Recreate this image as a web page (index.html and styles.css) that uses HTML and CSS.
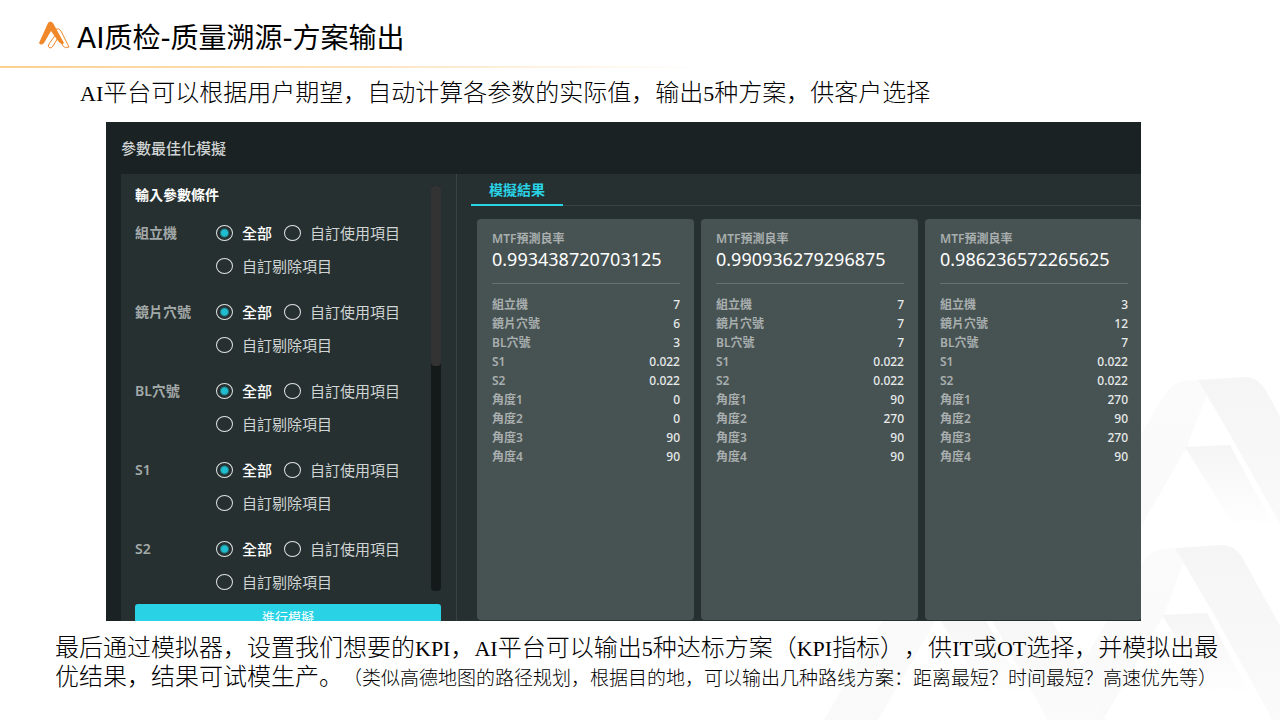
FILE: index.html
```html
<!DOCTYPE html>
<html lang="zh-CN">
<head>
    <meta charset="UTF-8">
    <meta name="viewport" content="width=device-width, initial-scale=1.0">
    <title>AI质检-质量溯源-方案输出</title>
    <link rel="stylesheet" href="styles.css">
</head>
<body>
    <!-- Pale logo pattern in the bottom right corner -->
    <svg class="watermark" viewBox="0 0 500 360" aria-hidden="true">
        <defs>
            <linearGradient id="leg" x1="0" y1="0" x2="0" y2="1">
                <stop offset="0" stop-color="#f5f5f5"/>
                <stop offset="1" stop-color="#fcfcfc"/>
            </linearGradient>
            <linearGradient id="leg-soft" x1="0" y1="0" x2="0" y2="1">
                <stop offset="0" stop-color="#fbfbfb"/>
                <stop offset="1" stop-color="#f9f9f9"/>
            </linearGradient>
            <linearGradient id="bar" x1="0" y1="0" x2="0" y2="1">
                <stop offset="0" stop-color="#f5f5f5"/>
                <stop offset="1" stop-color="#fff"/>
            </linearGradient>
            <g id="mark">
                <path fill="url(#leg-soft)" d="M0 190 L100 20 Q110 5 122 4 L135 3 L144 16 L124 70 L60 180 Q40 205 20 205 Q0 205 0 190 Z"/>
                <path fill="url(#leg)" d="M135 3 L182 0 Q194 0 202 12 L300 190 L262 215 Q240 205 230 170 L173 68 Z"/>
                <path fill="url(#bar)" d="M122 70 L167 68 L210 148 L173 152 Z"/>
            </g>
        </defs>
        <use href="#mark" x="283" y="17"/>
        <use href="#mark" x="260" y="185"/>
        <use href="#mark" x="35" y="185"/>
    </svg>

    <header class="header">
        <svg class="logo" viewBox="0 0 32 28" aria-hidden="true">
            <path fill="#f0882a" d="M10 2 Q12 -1 15 2 L26 22 Q24 25 20 20 L13 10 L6 22 Q3 25 1 22 Z"/>
            <path fill="none" stroke="#f0882a" d="M18 13 L11 23 Q9 26 12 27 Q14 27 15 25 L21 15 M18 8 Q21 7 23 10 L31 26 Q27 28 25 25 L18 12"/>
        </svg>
        <h1>AI质检-质量溯源-方案输出</h1>
    </header>

    <p class="intro"><span class="latin">AI</span>平台可以根据用户期望，自动计算各参数的实际值，输出<span class="latin">5</span>种方案，供客户选择</p>

    <main class="simulator" lang="zh-TW">
        <h2>參數最佳化模擬</h2>
        <div class="workspace">
            <form class="params">
                <div class="params-body">
                    <div class="params-list" id="params-list">
                        <h3>輸入參數條件</h3>
                        <!-- Parameter rows are added here -->
                    </div>
                    <div class="scrollbar"><div class="thumb"></div></div>
                </div>
                <button type="button" class="run-button">進行模擬</button>
            </form>
            <section class="results">
                <div class="tabs">
                    <button type="button" class="tab">模擬結果</button>
                </div>
                <div class="cards" id="cards"></div>
            </section>
        </div>
    </main>

    <p class="summary">最后通过模拟器，设置我们想要的<span class="latin">KPI</span>，<span class="latin">AI</span>平台可以输出<span class="latin">5</span>种达标方案（<span class="latin">KPI</span>指标），供<span class="latin">IT</span>或<span class="latin">OT</span>选择，并模拟出最优结果，结果可试模生产。<small>（类似高德地图的路径规划，根据目的地，可以输出几种路线方案：距离最短？时间最短？高速优先等）</small></p>

    <script src="script.js"></script>
</body>
</html>
```
FILE: styles.css
```css
* {
    box-sizing: border-box;
}

body {
    position: relative;
    display: flex;
    flex-direction: column;
    height: 100vh;
    margin: 0;
    overflow: hidden;
    background-color: #fff;
    color: #000;
    font-family: "Noto Sans CJK SC", sans-serif;
    text-spacing-trim: space-all;
}

h1, h2, h3, p, dl, dd {
    margin: 0;
}

.watermark {
    position: absolute;
    right: 0;
    bottom: 0;
    z-index: -1;
    width: 500px;
}

/* Title bar */
.header {
    position: relative;
    display: flex;
    align-items: center;
    gap: 7px;
    height: 68px;
    padding: 10px 38px 0;
}

.header::after {
    content: "";
    position: absolute;
    left: 0;
    bottom: 0;
    width: 55%;
    height: 2px;
    background: linear-gradient(to right, #fbd08f, #fde3bd 50%, #fff);
}

.logo {
    width: 32px;
    height: 28px;
    margin-bottom: 8px;
}

h1 {
    font-family: "DejaVu Sans", "Noto Sans CJK SC", sans-serif;
    font-size: 28px;
    font-weight: 400;
    line-height: 40px;
}

.intro {
    padding: 7px 80px 15px;
    font-size: 24px;
    font-weight: 300;
    line-height: 32px;
}

.latin {
    font-family: "Liberation Serif", serif;
    font-size: 22px;
    line-height: 1;
}

/* Simulator panel */
.simulator {
    display: flex;
    flex: 1;
    flex-direction: column;
    min-height: 0;
    margin: 0 139px 0 106px;
    padding: 12px 0 0 15px;
    overflow: hidden;
    background-color: #1a2223;
    color: #d0d4d4;
    font-family: "Noto Sans", "Noto Sans CJK TC", sans-serif;
}

h2 {
    font-size: 15px;
    font-weight: 500;
    line-height: 28px;
}

.workspace {
    display: flex;
    flex: 1;
    min-height: 0;
    margin-top: 12px;
    background-color: #263030;
}

.params {
    flex: 0 0 336px;
    padding: 12px 15px 0 14px;
    border-right: 1px solid #374242;
}

.params-body {
    display: flex;
    height: 405px;
}

.params-list {
    flex: 1;
    overflow: hidden;
}

h3 {
    margin-bottom: 20px;
    color: #fff;
    font-size: 14px;
    font-weight: 700;
    line-height: 18px;
}

.param {
    display: grid;
    grid-template-columns: 81px 1fr;
    height: 79px;
    font-size: 15px;
    line-height: 18px;
}

.param-name {
    color: #a3a9a9;
    font-size: 14px;
    font-weight: 600;
}

.options {
    display: flex;
    flex-wrap: wrap;
    align-content: flex-start;
    gap: 15px 12px;
}

.options label {
    display: flex;
    align-items: center;
    gap: 9px;
}

.options label:has(:checked) {
    color: #fff;
    font-weight: 500;
}

.options input {
    appearance: none;
    width: 17px;
    height: 16px;
    margin: 0;
    border: 1px solid #dfe3e3;
    border-radius: 50%;
}

.options input:checked {
    background: radial-gradient(circle, #1fbdcf 3px, transparent 5px);
}

.scrollbar {
    width: 10px;
    border-radius: 4px;
    background-color: #141a1a;
}

.thumb {
    height: 180px;
    border-radius: 4px;
    background-color: #333;
}

.run-button {
    width: 100%;
    height: 26px;
    margin-top: 13px;
    padding: 0;
    border: none;
    border-radius: 3px;
    background-color: #29d3e5;
    color: #fff;
    font-family: inherit;
    font-size: 13px;
    line-height: 24px;
}

/* Results */
.results {
    flex: 1;
    min-width: 0;
    padding-left: 14px;
    overflow: hidden;
}

.tabs {
    display: flex;
    height: 32px;
    border-bottom: 1px solid #374242;
}

.tab {
    height: 32px;
    padding: 0 18px;
    border: none;
    border-bottom: 2px solid #29d3e5;
    background: none;
    color: #29d3e5;
    font-family: inherit;
    font-size: 14px;
    font-weight: 700;
}

.cards {
    display: flex;
    gap: 7px;
    height: calc(100% - 32px);
    padding: 13px 0 1px 6px;
}

.card {
    flex: 0 0 217px;
    padding: 12px 14px 0 15px;
    border-radius: 4px;
    background-color: #475252;
    font-size: 12px;
}

.card-title {
    color: #a9afaf;
    font-weight: 600;
    line-height: 16px;
}

.card-rate {
    padding-bottom: 12px;
    border-bottom: 1px solid #667070;
    color: #fff;
    font-size: 18px;
    line-height: 24px;
}

.card dl {
    margin-top: 11px;
}

.card dl div {
    display: flex;
    justify-content: space-between;
    line-height: 19px;
}

.card dt {
    color: #a9afaf;
    font-weight: 600;
}

.card dd {
    color: #e8ebeb;
    font-weight: 500;
}

.summary {
    padding: 10px 55px 31px;
    font-size: 24px;
    font-weight: 300;
    line-height: 29px;
}

.summary small {
    font-size: 19px;
    line-height: 1;
}
```
FILE: script.js
```js
const paramNames = ['組立機', '鏡片穴號', 'BL穴號', 'S1', 'S2'];
const resultNames = ['組立機', '鏡片穴號', 'BL穴號', 'S1', 'S2', '角度1', '角度2', '角度3', '角度4'];

const results = [
    { rate: '0.993438720703125', values: ['7', '6', '3', '0.022', '0.022', '0', '0', '90', '90'] },
    { rate: '0.990936279296875', values: ['7', '7', '7', '0.022', '0.022', '90', '270', '90', '90'] },
    { rate: '0.986236572265625', values: ['3', '12', '7', '0.022', '0.022', '270', '90', '270', '90'] }
];

// One row of radio buttons for each parameter
const list = document.getElementById('params-list');
paramNames.forEach((name, i) => {
    const row = document.createElement('div');
    row.className = 'param';
    row.innerHTML = `
        <span class="param-name" id="param-${i}">${name}</span>
        <div class="options" role="radiogroup" aria-labelledby="param-${i}">
            <label><input type="radio" name="param-${i}" value="all" checked>全部</label>
            <label><input type="radio" name="param-${i}" value="include">自訂使用項目</label>
            <label><input type="radio" name="param-${i}" value="exclude">自訂剔除項目</label>
        </div>
    `;
    list.appendChild(row);
});

// Result cards
const cards = document.getElementById('cards');
results.forEach(result => {
    const card = document.createElement('article');
    card.className = 'card';
    card.innerHTML = `
        <div class="card-title">MTF預測良率</div>
        <div class="card-rate">${result.rate}</div>
        <dl>
            ${resultNames.map((name, i) => `<div><dt>${name}</dt><dd>${result.values[i]}</dd></div>`).join('')}
        </dl>
    `;
    cards.appendChild(card);
});
```
